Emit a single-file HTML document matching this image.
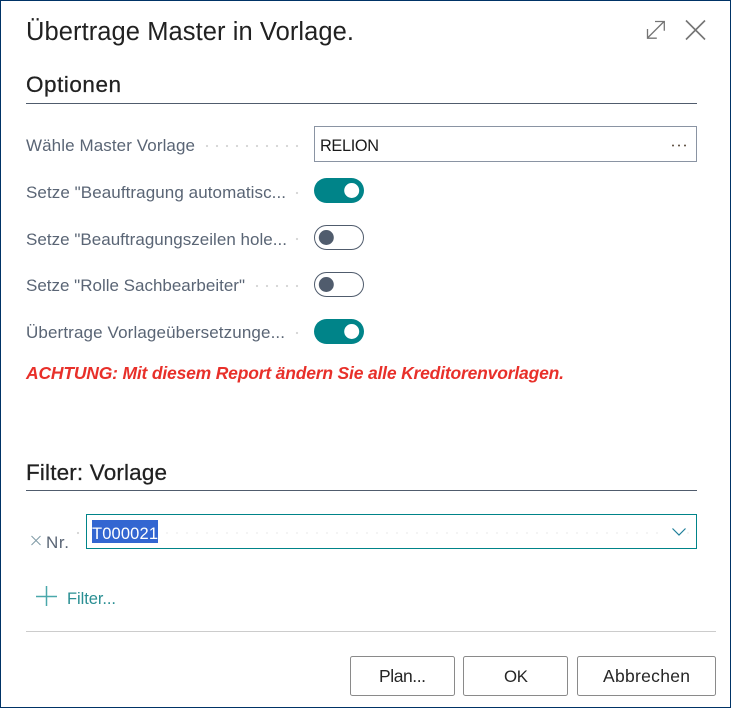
<!DOCTYPE html>
<html lang="de">
<head>
<meta charset="utf-8">
<title>Übertrage Master in Vorlage.</title>
<style>
html,body{margin:0;padding:0;background:#fff;}
svg{display:block;}
text{font-family:"Liberation Sans",sans-serif;}
.lab{font-size:17px;fill:#5a6575;}
.h{font-size:22.5px;fill:#212121;stroke:#212121;stroke-width:.25;}
.btn{font-size:17.5px;fill:#262626;}
</style>
</head>
<body>
<svg width="731" height="708" viewBox="0 0 731 708" xmlns="http://www.w3.org/2000/svg">
  <rect width="731" height="708" fill="#fff"/>
  <rect x="0.5" y="0.5" width="730" height="707" fill="none" stroke="#003366" stroke-width="1"/>

  <text x="26" y="40" font-size="25.5" fill="#212121" textLength="328" lengthAdjust="spacing">Übertrage Master in Vorlage.</text>

  <g fill="none" stroke="#757575" stroke-width="1.3">
    <path d="M647.5 38L664 21.5M655 21.5H664.3V30.8M647.5 29V38.2H656.8"/>
    <path d="M686 20.5L705 39.5M705 20.5L686 39.5" stroke-width="1.6"/>
  </g>

  <text x="26" y="92" class="h" textLength="95" lengthAdjust="spacing">Optionen</text>
  <rect x="26" y="103" width="671" height="1" fill="#505c6d"/>

  <text x="26" y="151" class="lab" textLength="169" lengthAdjust="spacing">Wähle Master Vorlage</text>
  <g fill="#d4d4d4">
    <circle cx="207" cy="146" r="1.1"/><circle cx="217" cy="146" r="1.1"/><circle cx="227" cy="146" r="1.1"/><circle cx="237" cy="146" r="1.1"/><circle cx="247" cy="146" r="1.1"/><circle cx="257" cy="146" r="1.1"/><circle cx="267" cy="146" r="1.1"/><circle cx="277" cy="146" r="1.1"/><circle cx="287" cy="146" r="1.1"/><circle cx="297" cy="146" r="1.1"/>
    <circle cx="297" cy="193" r="1.1"/>
    <circle cx="297" cy="239" r="1.1"/>
    <circle cx="257" cy="286" r="1.1"/><circle cx="267" cy="286" r="1.1"/><circle cx="277" cy="286" r="1.1"/><circle cx="287" cy="286" r="1.1"/><circle cx="297" cy="286" r="1.1"/>
    <circle cx="297" cy="333" r="1.1"/>
    <circle cx="78" cy="533" r="1.1"/>
  </g>

  <rect x="314.5" y="126.5" width="382" height="35" fill="#fff" stroke="#8a94a3"/>
  <text x="320" y="151" font-size="16.3" fill="#1a1a1a" textLength="59" lengthAdjust="spacing">RELION</text>
  <g fill="#5a4a3c">
    <circle cx="673" cy="145.5" r="1"/><circle cx="679" cy="145.5" r="1"/><circle cx="685" cy="145.5" r="1"/>
  </g>

  <text x="26" y="198" class="lab" textLength="260" lengthAdjust="spacing">Setze "Beauftragung automatisc...</text>
  <rect x="314" y="178" width="50" height="25" rx="12.5" fill="#008489"/>
  <circle cx="351.7" cy="190.5" r="7.5" fill="#fff"/>

  <text x="26" y="245" class="lab" textLength="261" lengthAdjust="spacing">Setze "Beauftragungszeilen hole...</text>
  <rect x="314.5" y="225.5" width="49" height="24" rx="12" fill="#fff" stroke="#505c6d"/>
  <circle cx="326.3" cy="237.5" r="7.5" fill="#505c6d"/>

  <text x="26" y="291" class="lab" textLength="219" lengthAdjust="spacing">Setze "Rolle Sachbearbeiter"</text>
  <rect x="314.5" y="272.5" width="49" height="24" rx="12" fill="#fff" stroke="#505c6d"/>
  <circle cx="326.3" cy="284.5" r="7.5" fill="#505c6d"/>

  <text x="26" y="338" class="lab" textLength="259" lengthAdjust="spacing">Übertrage Vorlageübersetzunge...</text>
  <rect x="314" y="319" width="50" height="25" rx="12.5" fill="#008489"/>
  <circle cx="351.7" cy="331.5" r="7.5" fill="#fff"/>

  <text x="26" y="379" font-size="17.5" font-weight="bold" font-style="italic" fill="#e8302a" textLength="538" lengthAdjust="spacing">ACHTUNG: Mit diesem Report ändern Sie alle Kreditorenvorlagen.</text>

  <text x="26" y="480" class="h" textLength="141" lengthAdjust="spacing">Filter: Vorlage</text>
  <rect x="26" y="490" width="671" height="1" fill="#505c6d"/>

  <path d="M31.5 536L40.5 545M40.5 536L31.5 545" stroke="#7f9aa6" stroke-width="1" fill="none"/>
  <text x="46" y="548" class="lab" textLength="23" lengthAdjust="spacing">Nr.</text>

  <rect x="86.5" y="514.5" width="610" height="34" fill="#fff" stroke="#008489"/>
  <g fill="#f1f1f1">
    <circle cx="167" cy="533" r="1"/><circle cx="177" cy="533" r="1"/><circle cx="187" cy="533" r="1"/><circle cx="197" cy="533" r="1"/><circle cx="207" cy="533" r="1"/><circle cx="217" cy="533" r="1"/><circle cx="227" cy="533" r="1"/><circle cx="237" cy="533" r="1"/><circle cx="247" cy="533" r="1"/><circle cx="257" cy="533" r="1"/><circle cx="267" cy="533" r="1"/><circle cx="277" cy="533" r="1"/><circle cx="287" cy="533" r="1"/><circle cx="297" cy="533" r="1"/><circle cx="307" cy="533" r="1"/><circle cx="317" cy="533" r="1"/><circle cx="327" cy="533" r="1"/><circle cx="337" cy="533" r="1"/><circle cx="347" cy="533" r="1"/><circle cx="357" cy="533" r="1"/><circle cx="367" cy="533" r="1"/><circle cx="377" cy="533" r="1"/><circle cx="387" cy="533" r="1"/><circle cx="397" cy="533" r="1"/><circle cx="407" cy="533" r="1"/><circle cx="417" cy="533" r="1"/><circle cx="427" cy="533" r="1"/><circle cx="437" cy="533" r="1"/><circle cx="447" cy="533" r="1"/><circle cx="457" cy="533" r="1"/><circle cx="467" cy="533" r="1"/><circle cx="477" cy="533" r="1"/><circle cx="487" cy="533" r="1"/><circle cx="497" cy="533" r="1"/><circle cx="507" cy="533" r="1"/><circle cx="517" cy="533" r="1"/><circle cx="527" cy="533" r="1"/><circle cx="537" cy="533" r="1"/><circle cx="547" cy="533" r="1"/><circle cx="557" cy="533" r="1"/><circle cx="567" cy="533" r="1"/><circle cx="577" cy="533" r="1"/><circle cx="587" cy="533" r="1"/><circle cx="597" cy="533" r="1"/><circle cx="607" cy="533" r="1"/><circle cx="617" cy="533" r="1"/><circle cx="627" cy="533" r="1"/><circle cx="637" cy="533" r="1"/><circle cx="647" cy="533" r="1"/><circle cx="657" cy="533" r="1"/><circle cx="688" cy="533" r="1"/>
  </g>
  <rect x="92" y="520" width="66" height="23" fill="#3366d1"/>
  <text x="92" y="539" font-size="16.5" fill="#fff" textLength="66" lengthAdjust="spacing">T000021</text>
  <path d="M672.5 528.5L679 535L685.5 528.5" fill="none" stroke="#1f7f9a" stroke-width="1.2"/>

  <path d="M36 596.5H57M46.5 586V606" stroke="#4aa8ab" stroke-width="1.5" fill="none"/>
  <text x="67" y="604" font-size="16.5" fill="#2a8f93" textLength="49" lengthAdjust="spacing">Filter...</text>

  <rect x="26" y="631" width="690" height="1" fill="#cccccc"/>

  <rect x="350.5" y="656.5" width="104" height="39" rx="2" fill="#fff" stroke="#8a8a8a"/>
  <rect x="463.5" y="656.5" width="104" height="39" rx="2" fill="#fff" stroke="#8a8a8a"/>
  <rect x="577.5" y="656.5" width="138" height="39" rx="2" fill="#fff" stroke="#8a8a8a"/>
  <text x="379" y="682" class="btn" textLength="47" lengthAdjust="spacing">Plan...</text>
  <text x="504" y="682" font-size="16.8" fill="#262626" textLength="24" lengthAdjust="spacing">OK</text>
  <text x="603" y="682" class="btn" textLength="87" lengthAdjust="spacing">Abbrechen</text>
</svg>
</body>
</html>
